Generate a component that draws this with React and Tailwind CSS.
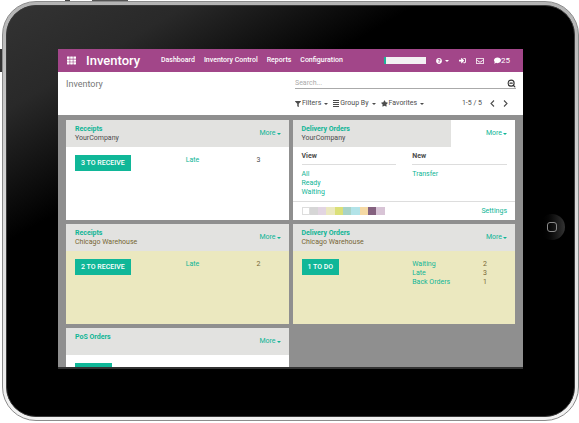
import React from "react";
import {
  FaComment,
  FaFilter,
  FaQuestionCircle,
  FaRegEnvelope,
  FaSignInAlt,
  FaStar,
  FaTh,
} from "react-icons/fa";
import { ZoomOut } from "lucide-react";

const swatches = [
  { name: "White", cls: "bg-white border border-[#dddddd]" },
  { name: "Grey", cls: "bg-[#d6d6d6]" },
  { name: "Lilac", cls: "bg-[#e2d5e2]" },
  { name: "Cream", cls: "bg-[#ebe8bf]" },
  { name: "Lime", cls: "bg-[#dbe078]" },
  { name: "Teal", cls: "bg-[#a8d3c8]" },
  { name: "Sky", cls: "bg-[#b2e3e8]" },
  { name: "Peach", cls: "bg-[#f5d9a4]" },
  { name: "Plum", cls: "bg-[#84617f]" },
  { name: "Mauve", cls: "bg-[#d8c4d6]" },
];

function Caret() {
  return (
    <svg viewBox="0 0 8 4" className="h-[2px] w-[4px]" fill="currentColor" aria-hidden="true">
      <path d="M0 0h8L4 4z" />
    </svg>
  );
}

function ListIcon() {
  return (
    <svg viewBox="0 0 6 7" className="h-[7px] w-[6px]" fill="currentColor" aria-hidden="true">
      <path d="M0 0h6v1H0zM0 2h6v1H0zM0 4h6v1H0zM0 6h6v1H0z" />
    </svg>
  );
}

function Chevron({ d }) {
  return (
    <svg
      viewBox="0 0 5 7"
      className="h-[7px] w-[5px]"
      fill="none"
      stroke="currentColor"
      strokeWidth="1.1"
      aria-hidden="true"
    >
      <path d={d} />
    </svg>
  );
}

function TopBar() {
  return (
    <header className="flex h-[23px] items-center bg-[#a24689] pl-[9px] pr-[13px] text-[7px] leading-[9px] text-white">
      <button aria-label="Apps">
        <FaTh className="size-[9px]" />
      </button>
      <h1 className="ml-[10px] w-[75px] text-[13px] font-medium leading-[15px]">Inventory</h1>
      <nav className="flex gap-[9px] whitespace-nowrap font-medium">
        <a href="#dashboard">Dashboard</a>
        <a href="#control">Inventory Control</a>
        <a href="#reports">Reports</a>
        <a href="#configuration">Configuration</a>
      </nav>
      <div className="ml-auto flex items-center">
        <div className="mr-[10px] h-[7px] w-[42px] border-l-2 border-[#1fb39a] bg-[#f3f1f3]" />
        <button aria-label="Help" className="mr-[10px] flex items-center gap-[3px]">
          <FaQuestionCircle className="size-[6px]" />
          <Caret />
        </button>
        <button aria-label="Sign in" className="mr-[10px]">
          <FaSignInAlt className="size-[7px]" />
        </button>
        <button aria-label="Mail" className="mr-[10px]">
          <FaRegEnvelope className="size-[8px]" />
        </button>
        <button className="flex items-center text-[8px]">
          <FaComment className="size-[7px]" />
          25
        </button>
      </div>
    </header>
  );
}

function FilterButton({ icon, children }) {
  return (
    <button className="flex items-center gap-[1px]">
      {icon}
      {children}
      <span className="ml-[2px]">
        <Caret />
      </span>
    </button>
  );
}

function ControlPanel() {
  return (
    <section className="grid h-[43px] grid-cols-2 bg-white pl-[8px] pr-[7px] text-[7px] leading-[9px] text-[#4c4c4c]">
      <h2 className="pt-[6px] text-[9px] leading-[12px] text-[#777777]">Inventory</h2>
      <div className="pl-[4px]">
        <div className="mt-[6px] flex h-[11px] items-center border-b border-[#aaaaaa]">
          <input
            aria-label="Search"
            placeholder="Search..."
            className="min-w-0 flex-1 bg-transparent text-[7px] leading-[9px] outline-none placeholder:text-[#aaaaaa]"
          />
          <ZoomOut className="size-[9px] text-[#333333]" strokeWidth={3} />
        </div>
        <div className="flex items-center justify-between pt-[10px]">
          <div className="flex gap-[5px] whitespace-nowrap">
            <FilterButton icon={<FaFilter className="size-[6px]" />}>Filters</FilterButton>
            <FilterButton icon={<ListIcon />}>Group By</FilterButton>
            <FilterButton icon={<FaStar className="size-[7px]" />}>Favorites</FilterButton>
          </div>
          <div className="flex items-center gap-[8px] pr-[8px]">
            <span>1-5 / 5</span>
            <button aria-label="Previous">
              <Chevron d="M4 0.5 1 3.5l3 3" />
            </button>
            <button aria-label="Next">
              <Chevron d="m1 0.5 3 3-3 3" />
            </button>
          </div>
        </div>
      </div>
    </section>
  );
}

function MoreButton() {
  return (
    <button className="flex items-center gap-[1px] text-[#0fb596]">
      More
      <Caret />
    </button>
  );
}

function Card({ title, subtitle, tinted, open, children }) {
  return (
    <article className={`flex h-[100px] flex-col ${tinted ? "bg-[#ebe8bf]" : "bg-white"}`}>
      <div className="flex h-[27px] bg-[#e2e2e0]">
        <div className="flex-1 pl-[9px] pt-[5px]">
          <h3 className="font-bold text-[#0fb596]">{title}</h3>
          <p className={tinted ? "text-[#766634]" : "text-[#4c4c4c]"}>{subtitle}</p>
        </div>
        <div className={`flex w-[64px] items-center justify-end pr-[8px] ${open ? "bg-white" : ""}`}>
          <MoreButton />
        </div>
      </div>
      {children}
    </article>
  );
}

function Summary({ action, rows, tinted }) {
  return (
    <div className="grid grid-cols-2 gap-[16px] pl-[9px] pr-[8px] pt-[8px]">
      <div>
        <button className="h-[16px] bg-[#10b798] px-[6px] font-medium text-white">{action}</button>
      </div>
      <ul className="pt-[1px]">
        {rows.map(([label, count]) => (
          <li key={label} className="flex justify-between pr-[20px]">
            <a href="#transfers" className="text-[#0fb596]">
              {label}
            </a>
            <span className={tinted ? "text-[#766634]" : "text-[#4c4c4c]"}>{count}</span>
          </li>
        ))}
      </ul>
    </div>
  );
}

function MenuColumn({ title, items }) {
  return (
    <div>
      <h4 className="mb-[5px] border-b border-[#dddddd] pb-[3px] font-bold text-[#4c4c4c]">{title}</h4>
      <ul className="text-[#0fb596]">
        {items.map((item) => (
          <li key={item}>
            <a href="#menu">{item}</a>
          </li>
        ))}
      </ul>
    </div>
  );
}

function CardMenu() {
  return (
    <>
      <div className="grid flex-1 grid-cols-2 gap-[16px] pl-[9px] pr-[8px] pt-[5px]">
        <MenuColumn title="View" items={["All", "Ready", "Waiting"]} />
        <MenuColumn title="New" items={["Transfer"]} />
      </div>
      <div className="flex h-[19px] items-center justify-between border-t border-[#dddddd] pl-[9px] pr-[8px]">
        <div className="grid w-[83px] grid-cols-10">
          {swatches.map((s) => (
            <button key={s.name} aria-label={s.name} className={`h-[8px] ${s.cls}`} />
          ))}
        </div>
        <a href="#settings" className="text-[#0fb596]">
          Settings
        </a>
      </div>
    </>
  );
}

function Board() {
  return (
    <main className="grid h-[252px] grid-cols-2 content-start gap-[4px] overflow-hidden bg-[#8f8f8f] px-[8px] pt-[5px] text-[7px] leading-[9px]">
      <Card title="Receipts" subtitle="YourCompany">
        <Summary action="3 TO RECEIVE" rows={[["Late", 3]]} />
      </Card>
      <Card title="Delivery Orders" subtitle="YourCompany" open>
        <CardMenu />
      </Card>
      <Card title="Receipts" subtitle="Chicago Warehouse" tinted>
        <Summary action="2 TO RECEIVE" rows={[["Late", 2]]} tinted />
      </Card>
      <Card title="Delivery Orders" subtitle="Chicago Warehouse" tinted>
        <Summary action="1 TO DO" rows={[["Waiting", 2], ["Late", 3], ["Back Orders", 1]]} tinted />
      </Card>
      <Card title="PoS Orders">
        <div className="pl-[9px] pt-[8px]">
          <button aria-label="Open PoS orders" className="h-[16px] w-[37px] bg-[#10b798]" />
        </div>
      </Card>
    </main>
  );
}

export default function App() {
  return (
    <div className="relative bg-white pl-[2px] pt-[1px] font-[Roboto,sans-serif]">
      <div className="absolute left-0 top-[49px] h-[23px] w-[3px] bg-[#333333]" />
      <div className="absolute left-[65px] top-0 h-[2px] w-[5px] bg-[#444444]" />
      <div className="absolute left-[92px] top-0 h-[2px] w-[36px] bg-[#555555]" />
      <div className="relative rounded-[34px] border border-[#8c8c8c] bg-linear-to-b from-[#b4b4b4] via-[#dcdcdc] to-[#f2f2f2] p-[3px]">
        <div className="flex rounded-[30px] border border-[#3a3a3a] bg-black bg-linear-[150deg,#333333_0%,#292929_14%,#000000_32%] pb-[47px] pt-[43px]">
          <div className="w-[51px]" />
          <div className="min-w-0 flex-1 border-b-2 border-[#333333]">
            <TopBar />
            <ControlPanel />
            <Board />
          </div>
          <div className="flex w-[51px] items-start justify-center pl-[6px] pt-[165px]">
            <button
              aria-label="Home"
              className="flex size-[26px] items-center justify-center rounded-full bg-linear-to-r from-black to-[#333333]"
            >
              <span className="size-[10px] rounded-[3px] border border-[#8a8a8a]" />
            </button>
          </div>
        </div>
      </div>
    </div>
  );
}
